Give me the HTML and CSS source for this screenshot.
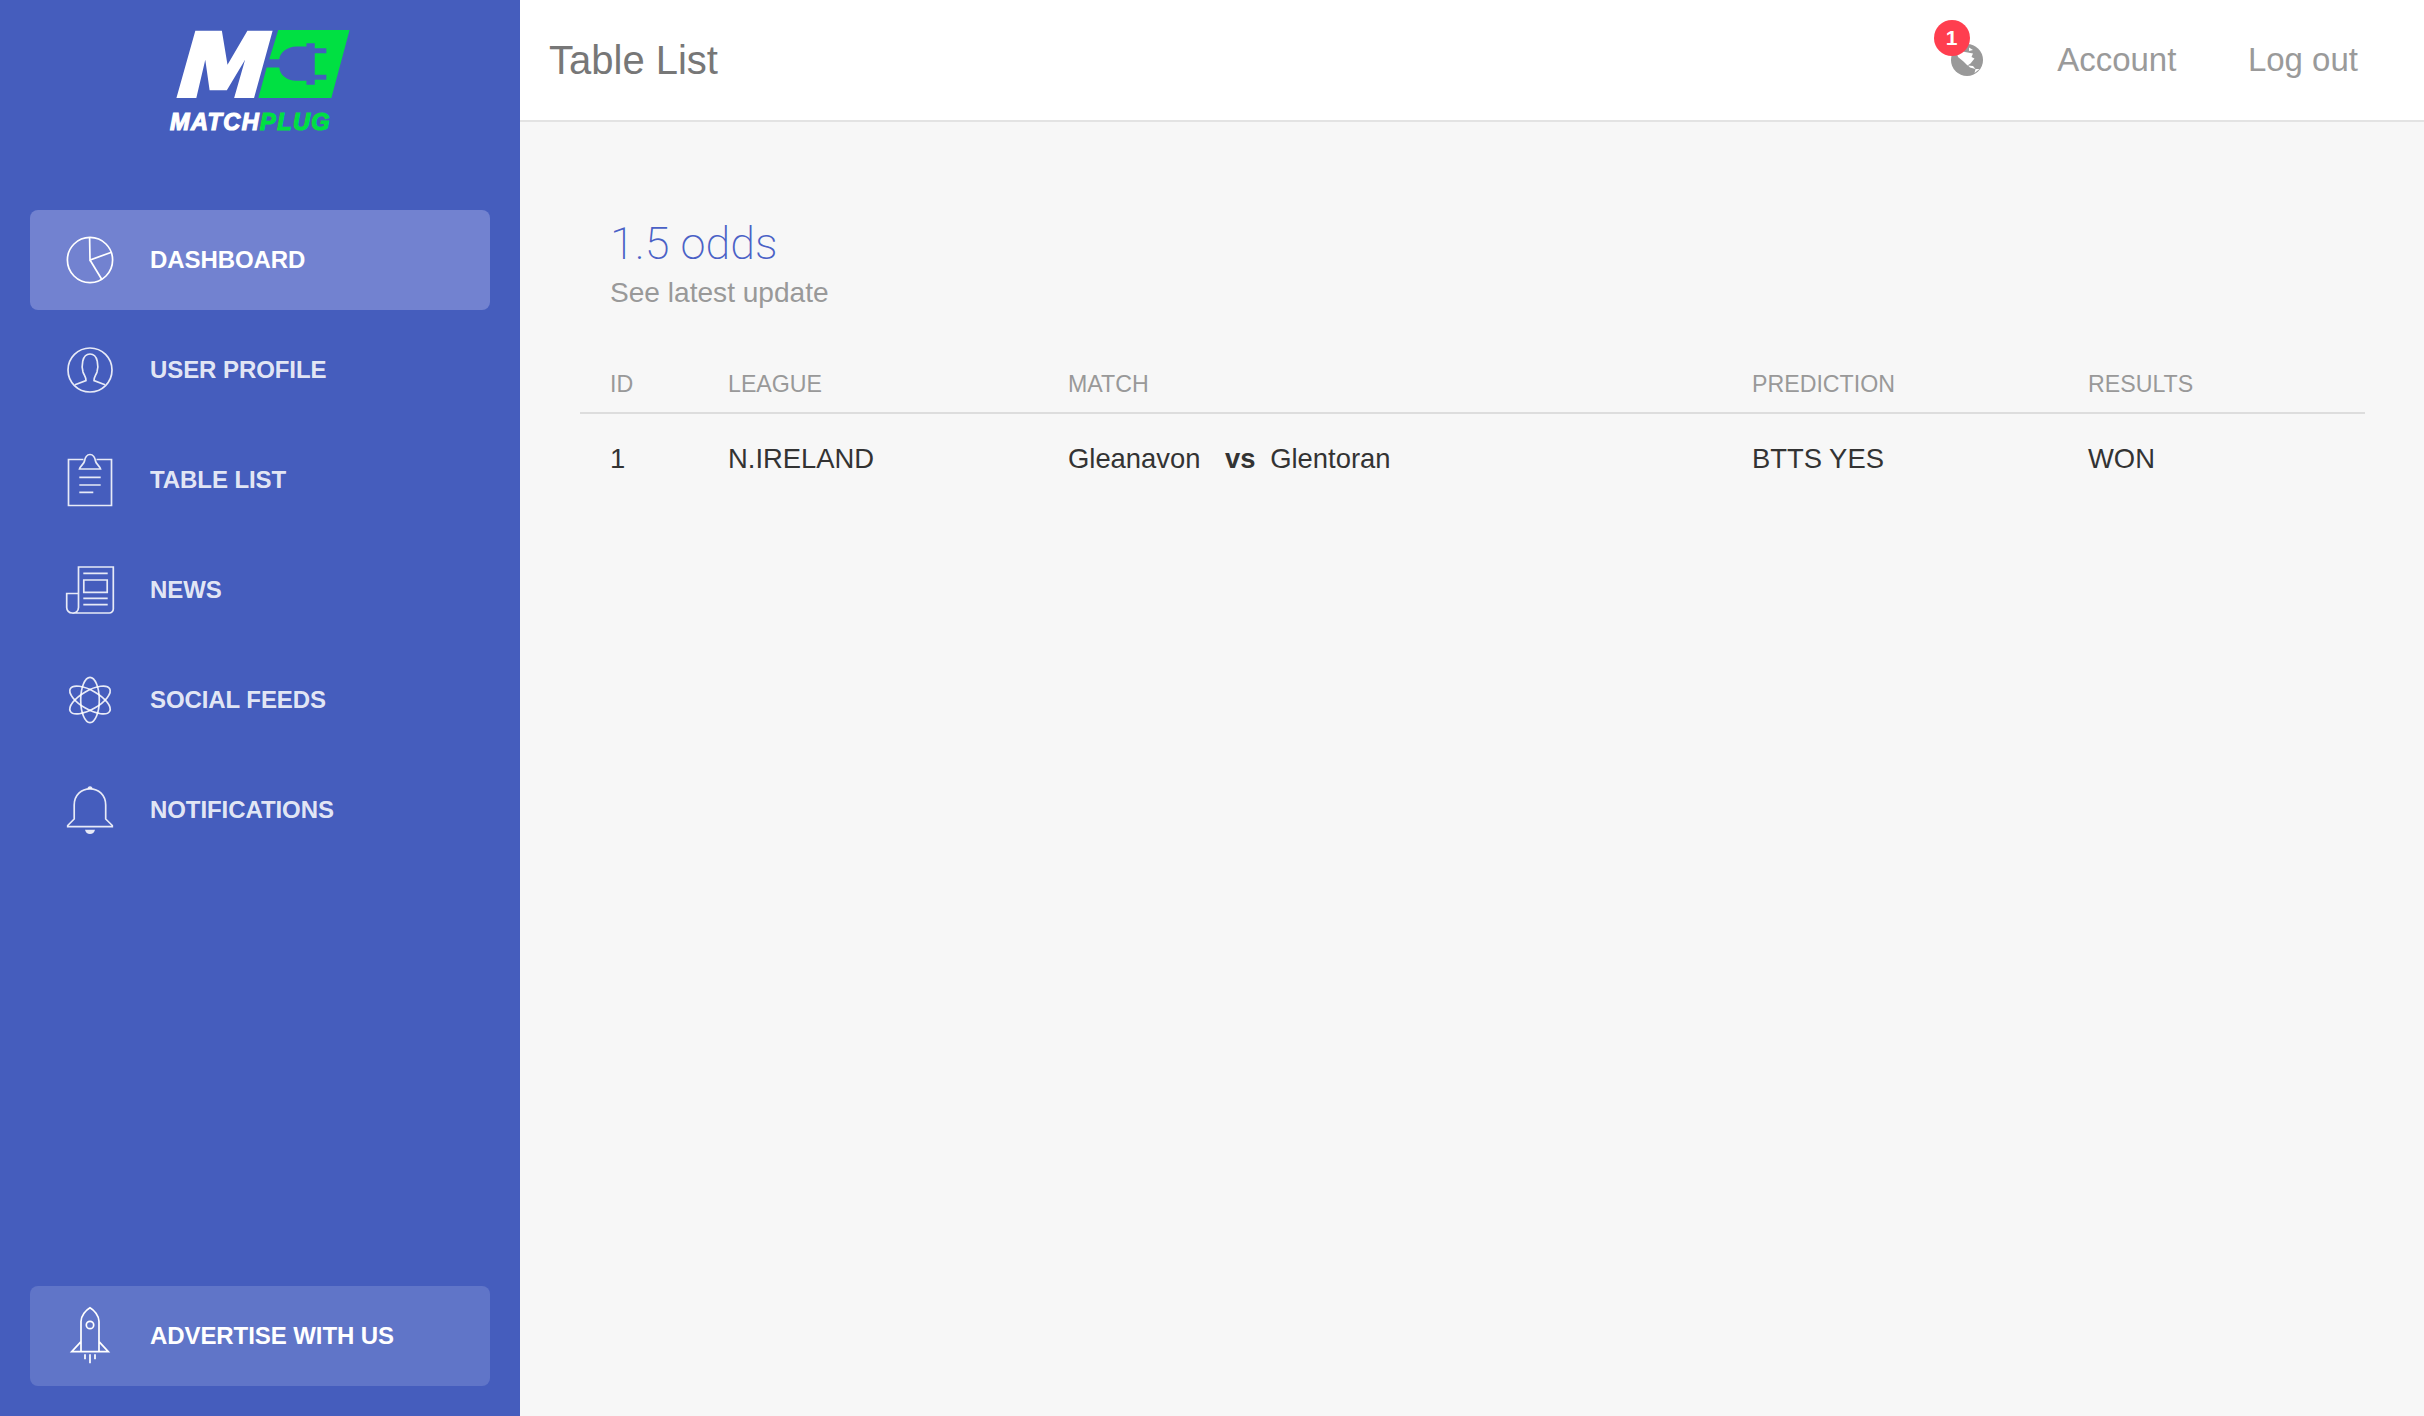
FILE: index.html
```html
<!DOCTYPE html>
<html lang="en">
<head>
<meta charset="utf-8">
<title>Table List</title>
<link rel="stylesheet" href="styles.css">
</head>
<body>
<div class="app">
  <aside class="sidebar">
    <div class="logo">
      <svg class="logo-mark" viewBox="108 90 522 205" width="174" height="68">
        <polygon fill="#fff" points="108,295 165,92 245,92 262,195 322,92 398,92 342,295 282,295 315,180 260,272 208,272 195,180 168,295"/>
        <polygon fill="#00e042" points="415,90 630,90 575,295 355,295 380,203 388,178"/>
        <path fill="#455dbd" d="M500 130h25v15h35v15h-35v65h35v15h-35v15h-25v-12h-30c-30 0-50-18-52-40h-42v-25h42c2-18 22-38 52-38h30z"/>
      </svg>
      <div class="logo-text">MATCH<span class="logo-plug">PLUG</span></div>
    </div>
    <nav class="nav">
      <a class="nav-item active">
        <svg class="nav-icon" viewBox="0 0 60 60"><circle cx="30" cy="30" r="22.6"/><path d="M29.6 7.4 30 30 51.5 22.2M30 30 41.7 49.2"/></svg>
        <span>DASHBOARD</span>
      </a>
      <a class="nav-item">
        <svg class="nav-icon" viewBox="0 0 60 60"><circle cx="30" cy="30" r="22"/><path d="M15 44.7 26 40.5C26.5 38 24 35 23 32 21.5 27 21.5 14 30 14S38.500 27 37 32C36 35 33.500 38 34 40.500L45 44.700"/></svg>
        <span>USER PROFILE</span>
      </a>
      <a class="nav-item">
        <svg class="nav-icon" viewBox="0 0 60 60"><path d="M23.500 9.500H8.500V55.500H51.500V9.500H36.500M19.500 19H40.500C39.500 15.500 36 14 35.500 11 35 8 33 4.500 30 4.500S25 8 24.500 11C24 14 20.500 15.500 19.500 19ZM19.300 27.300H40.700M19.300 35H40.700M19.300 42.300H33.300"/></svg>
        <span>TABLE LIST</span>
      </a>
      <a class="nav-item">
        <svg class="nav-icon" viewBox="0 0 60 60"><path d="M12 53H49A4 4 0 0 0 53.300 49V7H18.500V47.500A5.500 5.500 0 0 1 12 53 5.500 5.500 0 0 1 6.700 47.500V33.500H18.500M23.300 13.300H47.700M23.300 38.300H47.700M23.300 44.700H47.700M23.800 20H47.200V32.300H23.800Z"/></svg>
        <span>NEWS</span>
      </a>
      <a class="nav-item">
        <svg class="nav-icon" viewBox="0 0 60 60"><ellipse cx="30" cy="30" rx="9.300" ry="22.700"/><ellipse cx="30" cy="30" rx="9.300" ry="22.700" transform="rotate(60 30 30)"/><ellipse cx="30" cy="30" rx="9.300" ry="22.700" transform="rotate(120 30 30)"/></svg>
        <span>SOCIAL FEEDS</span>
      </a>
      <a class="nav-item">
        <svg class="nav-icon" viewBox="0 0 60 60"><path d="M7.700 46.700H52.300V45.500L45.700 39V25C45.700 15 38.500 8.800 30 8.800S14.200 15 14.200 25V39L7.700 45.500Z"/><path class="icon-fill" d="M27.500 8.800a2.500 2.500 0 0 1 5 0zM25 49.700H35C34.500 52.500 32.500 54 30 54S25.500 52.500 25 49.700Z"/></svg>
        <span>NOTIFICATIONS</span>
      </a>
    </nav>
    <a class="nav-item advertise">
      <svg class="nav-icon rocket" viewBox="0 0 60 60"><path d="M21 45.700V15.500C21 9.500 26 4 30 1.700 34 4 39 9.500 39 15.500V45.700M21 35.700 11.700 45.700H48.300L39 35.700M25 48.300V53.300M30 48.300V57.300M35 48.300V53.300"/><circle cx="30" cy="19" r="3.700"/></svg>
      <span>ADVERTISE WITH US</span>
    </a>
  </aside>
  <div class="content">
    <header class="topbar">
      <h1 class="page-title">Table List</h1>
      <div class="top-actions">
        <div class="globe-wrap">
          <svg class="globe" viewBox="0 0 32 32" width="32" height="32">
            <circle cx="16" cy="16" r="16" fill="#999"/>
            <path fill="#fff" d="M5 6 14 8 22 9.500 20.500 13 23.500 14.500 19.500 19.500 16.500 21.500 12.500 17.500 7 13ZM17 21.500 22 22 24.500 25 19 23.500ZM18 3.500 22 6 18 7ZM23.500 29 28.500 25H24.500Z"/>
          </svg>
          <span class="badge">1</span>
        </div>
        <a class="top-link">Account</a>
        <a class="top-link">Log out</a>
      </div>
    </header>
    <main class="main">
      <h2 class="card-title">1.5 odds</h2>
      <p class="card-sub">See latest update</p>
      <table class="data-table">
        <colgroup><col class="col-id"><col class="col-league"><col class="col-match"><col class="col-pred"><col></colgroup>
        <thead>
          <tr><th>ID</th><th>LEAGUE</th><th>MATCH</th><th>PREDICTION</th><th>RESULTS</th></tr>
        </thead>
        <tbody>
          <tr><td>1</td><td>N.IRELAND</td><td>Gleanavon <b class="versus">vs</b> Glentoran</td><td>BTTS YES</td><td>WON</td></tr>
        </tbody>
      </table>
    </main>
  </div>
</div>
</body>
</html>
```
FILE: styles.css
```css
* { box-sizing: border-box; }
html, body { margin: 0; height: 100%; }
body { font-family: "Liberation Sans", Arial, sans-serif; background: #f7f7f7; color: #333; overflow: hidden; }
.app { display: flex; height: 1416px; }

.sidebar { width: 520px; flex: none; background: #455dbd; display: flex; flex-direction: column; padding: 0 30px 30px; }
.logo { height: 210px; padding: 30px 0 0 146px; }
.logo-mark { display: block; }
.logo-text { margin: 12px 0 0 -6px; font-size: 23.500px; line-height: 24px; font-weight: 700; font-style: italic; letter-spacing: 1.400px; color: #fff; -webkit-text-stroke: 1.200px currentColor; white-space: nowrap; }
.logo-plug { color: #00e042; }

.nav { display: flex; flex-direction: column; gap: 10px; }
.nav-item { height: 100px; padding-left: 30px; display: flex; align-items: center; gap: 30px; border-radius: 8px; color: rgba(255,255,255,.87); font-size: 24px; font-weight: 700; letter-spacing: -0.080px; }
.nav-item.active { background: #7282d0; color: #fff; }
.nav-icon { width: 60px; height: 60px; flex: none; fill: none; stroke: currentColor; stroke-width: 1.700; }
.icon-fill { fill: currentColor; stroke: none; }
.advertise { margin-top: auto; background: #6075c8; color: #fff; }

.content { flex: 1; min-width: 0; display: flex; flex-direction: column; }
.topbar { height: 122px; flex: none; background: #fff; border-bottom: 2px solid #e3e3e3; display: flex; align-items: center; justify-content: space-between; padding: 0 66px 0 29px; }
.page-title { margin: 0; font-size: 40px; font-weight: 400; color: #777; }
.top-actions { display: flex; align-items: center; gap: 71.500px; }
.top-link { font-size: 33px; color: #9a9a9a; }
.globe-wrap { position: relative; width: 32px; height: 32px; margin-right: 3px; }
.globe { display: block; }
.badge { position: absolute; left: -17px; top: -42px; width: 36px; height: 36px; margin-top: 18px; border-radius: 50%; background: #ff3e4f; color: #fff; font-size: 21px; font-weight: 700; line-height: 36px; text-align: center; }

.main { padding: 98px 59px 0 60px; }
.card-title { margin: 0 0 0 30px; font-family: Roboto, "Liberation Sans", sans-serif; font-size: 45px; line-height: 48px; font-weight: 200; color: #4a61c6; }
.card-sub { margin: 7px 0 0 30px; font-size: 28.100px; line-height: 36px; color: #999; }
.data-table { width: 100%; margin-top: 32px; border-collapse: collapse; table-layout: fixed; }
.col-id { width: 118px; }
.col-league { width: 340px; }
.col-match { width: 684px; }
.col-pred { width: 336px; }
.data-table th { height: 70px; padding: 13px 0 0 30px; border-bottom: 2px solid #ddd; font-size: 23.200px; font-weight: 400; color: #999; text-align: left; }
.data-table td { height: 90px; padding: 0 0 0 30px; font-size: 27.400px; color: #333; }
.versus { margin: 0 7px 0 17px; }
```
